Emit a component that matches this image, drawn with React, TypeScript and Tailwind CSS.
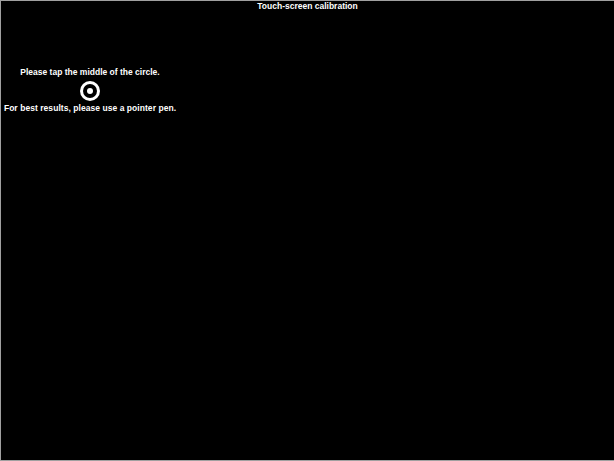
export default function App() {
  return (
    <div
      className="w-[614px] h-[461px] bg-black border-t border-l border-b border-[#a0a0a0] text-white flex flex-col overflow-hidden"
      style={{ fontFamily: '"Liberation Sans", Arial, sans-serif' }}
    >
      <div className="text-center text-[8.5px] font-bold leading-[11px] whitespace-nowrap">
        Touch-screen calibration
      </div>
      <div className="w-[180px] ml-[-1px] mt-[55px] flex flex-col items-center">
        <div className="text-[8.5px] font-bold leading-[11px] whitespace-nowrap">
          Please tap the middle of the circle.
        </div>
        <div className="mt-[3px] w-[20px] h-[20px] rounded-full bg-white flex items-center justify-center">
          <div className="w-[14px] h-[14px] rounded-full bg-black flex items-center justify-center">
            <div className="w-[6px] h-[6px] rounded-full bg-white" />
          </div>
        </div>
        <div className="mt-[2px] text-[8.5px] font-bold leading-[11px] tracking-[0.05px] whitespace-nowrap">
          For best results, please use a pointer pen.
        </div>
      </div>
    </div>
  );
}
